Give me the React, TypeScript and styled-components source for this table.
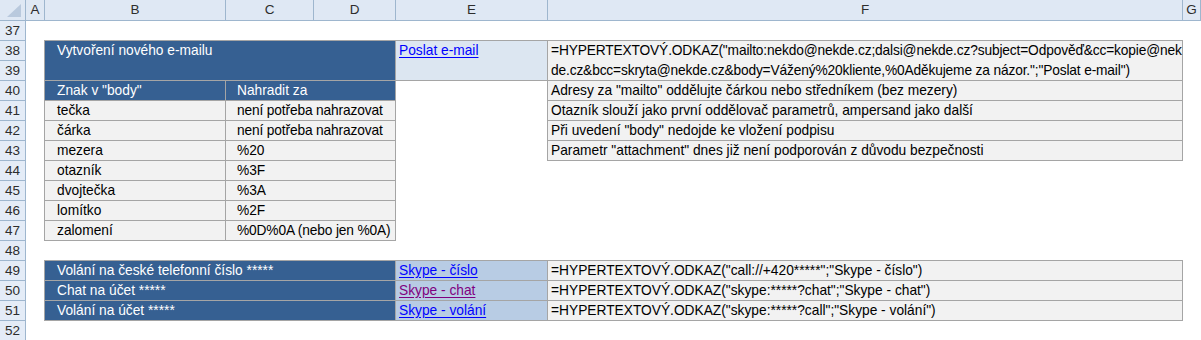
import React from 'react';
import styled, { createGlobalStyle, css } from 'styled-components';

const GlobalStyle = createGlobalStyle`
  html, body {
    margin: 0;
    padding: 0;
    background: #fff;
  }
  body {
    font-family: 'Liberation Sans', Arial, sans-serif;
    font-size: 13.75px;
    color: #000;
  }
`;

// row header, A..G
const Sheet = styled.div`
  display: grid;
  grid-template-columns: 26px 19px 181px 88px 82px 152px 635px 1fr;
  grid-template-rows: 21px repeat(16, 20px);
  width: 1201px;
  height: 340px;
  overflow: hidden;
  background: #fff;
`;

const Corner = styled.div`
  position: relative;
  background: #dfe8f4;
  border-right: 1px solid #9eb6ce;
  border-bottom: 1px solid #9eb6ce;

  &::after {
    content: '';
    position: absolute;
    right: 4px;
    bottom: 3px;
    width: 0;
    height: 0;
    border-left: 14px solid transparent;
    border-bottom: 13px solid #b9c9dd;
  }
`;

const ColHead = styled.div`
  background: #dfe8f4;
  border-right: 1px solid #9eb6ce;
  border-bottom: 1px solid #9eb6ce;
  color: #2d2d2d;
  font-size: 13.5px;
  line-height: 20px;
  text-align: center;
`;

const RowHead = styled.div`
  background: #e4ecf7;
  border-right: 1px solid #9eb6ce;
  border-bottom: 1px solid #9eb6ce;
  color: #2d2d2d;
  font-size: 13.5px;
  line-height: 19px;
  text-align: center;
`;

type Tone = 'dark' | 'gray' | 'pale' | 'sky';

const tones: Record<Tone, ReturnType<typeof css>> = {
  dark: css`
    background: #366092;
    color: #fff;
  `,
  gray: css`
    background: #f2f2f2;
    color: #000;
  `,
  pale: css`
    background: #dce6f1;
    color: #000;
  `,
  sky: css`
    background: #b8cce4;
    color: #000;
  `,
};

const Cell = styled.div<{
  $col: number;
  $span: number;
  $row: number;
  $rows: number;
  $tone: Tone;
  $indent: number;
  $tight?: boolean;
}>`
  grid-column: ${(p) => p.$col} / span ${(p) => p.$span};
  grid-row: ${(p) => p.$row} / span ${(p) => p.$rows};
  margin: -1px 0 0 -1px;
  border: 1px solid #a5a5a5;
  padding-left: ${(p) => p.$indent}px;
  line-height: 20px;
  white-space: nowrap;
  letter-spacing: ${(p) => (p.$tight ? '-0.15px' : 'normal')};
  ${(p) => tones[p.$tone]}
`;

const Link = styled.span<{ $visited?: boolean }>`
  color: ${(p) => (p.$visited ? '#800080' : '#0000ff')};
  text-decoration: underline;
  text-underline-offset: 2px;
  cursor: pointer;
`;

const COL = { B: 3, C: 4, E: 6, F: 7 };
const row = (n: number) => n - 35;

type CellData = {
  col: number;
  span?: number;
  r: number;
  rows?: number;
  tone: Tone;
  indent: number;
  tight?: boolean;
  content: React.ReactNode;
};

const replaceRows: [string, string][] = [
  ['tečka', 'není potřeba nahrazovat'],
  ['čárka', 'není potřeba nahrazovat'],
  ['mezera', '%20'],
  ['otazník', '%3F'],
  ['dvojtečka', '%3A'],
  ['lomítko', '%2F'],
  ['zalomení', '%0D%0A (nebo jen %0A)'],
];

const notes = [
  'Adresy za "mailto" oddělujte čárkou nebo středníkem (bez mezery)',
  'Otazník slouží jako první oddělovač parametrů, ampersand jako další',
  'Při uvedení "body" nedojde ke vložení podpisu',
  'Parametr "attachment" dnes již není podporován z důvodu bezpečnosti',
];

const skype = [
  {
    label: 'Volání na české telefonní číslo *****',
    link: 'Skype - číslo',
    visited: false,
    formula: '=HYPERTEXTOVÝ.ODKAZ("call://+420*****";"Skype - číslo")',
  },
  {
    label: 'Chat na účet *****',
    link: 'Skype - chat',
    visited: true,
    formula: '=HYPERTEXTOVÝ.ODKAZ("skype:*****?chat";"Skype - chat")',
  },
  {
    label: 'Volání na účet *****',
    link: 'Skype - volání',
    visited: false,
    formula: '=HYPERTEXTOVÝ.ODKAZ("skype:*****?call";"Skype - volání")',
  },
];

const cells: CellData[] = [
  { col: COL.B, span: 3, r: 38, rows: 2, tone: 'dark', indent: 12, content: 'Vytvoření nového e-mailu' },
  { col: COL.E, r: 38, rows: 2, tone: 'pale', indent: 3, content: <Link>Poslat e-mail</Link> },
  {
    col: COL.F,
    r: 38,
    rows: 2,
    tone: 'gray',
    indent: 3,
    tight: true,
    content: (
      <>
        =HYPERTEXTOVÝ.ODKAZ("mailto:nekdo@nekde.cz;dalsi@nekde.cz?subject=Odpověď&amp;cc=kopie@nek
        <br />
        de.cz&amp;bcc=skryta@nekde.cz&amp;body=Vážený%20kliente,%0Aděkujeme za názor.";"Poslat e-mail")
      </>
    ),
  },
  { col: COL.B, r: 40, tone: 'dark', indent: 12, content: 'Znak v "body"' },
  { col: COL.C, span: 2, r: 40, tone: 'dark', indent: 11, content: 'Nahradit za' },
  ...replaceRows.flatMap(([a, b], i): CellData[] => [
    { col: COL.B, r: 41 + i, tone: 'gray', indent: 12, content: a },
    { col: COL.C, span: 2, r: 41 + i, tone: 'gray', indent: 11, tight: b.length > 20, content: b },
  ]),
  ...notes.map((n, i): CellData => ({ col: COL.F, r: 40 + i, tone: 'gray', indent: 3, content: n })),
  ...skype.flatMap((s, i): CellData[] => [
    { col: COL.B, span: 3, r: 49 + i, tone: 'dark', indent: 12, content: s.label },
    { col: COL.E, r: 49 + i, tone: 'sky', indent: 3, content: <Link $visited={s.visited}>{s.link}</Link> },
    { col: COL.F, r: 49 + i, tone: 'gray', indent: 3, content: s.formula },
  ]),
];

const columns = ['A', 'B', 'C', 'D', 'E', 'F', 'G'];
const rowNumbers = Array.from({ length: 16 }, (_, i) => 37 + i);

function App() {
  return (
    <>
      <GlobalStyle />
      <Sheet>
        <Corner />
        {columns.map((c) => (
          <ColHead key={c}>{c}</ColHead>
        ))}
        {rowNumbers.map((n) => (
          <RowHead key={n} style={{ gridRow: row(n), gridColumn: 1 }}>
            {n}
          </RowHead>
        ))}
        {cells.map((c, i) => (
          <Cell
            key={i}
            $col={c.col}
            $span={c.span ?? 1}
            $row={row(c.r)}
            $rows={c.rows ?? 1}
            $tone={c.tone}
            $indent={c.indent}
            $tight={c.tight}
          >
            {c.content}
          </Cell>
        ))}
      </Sheet>
    </>
  );
}

export default App;
